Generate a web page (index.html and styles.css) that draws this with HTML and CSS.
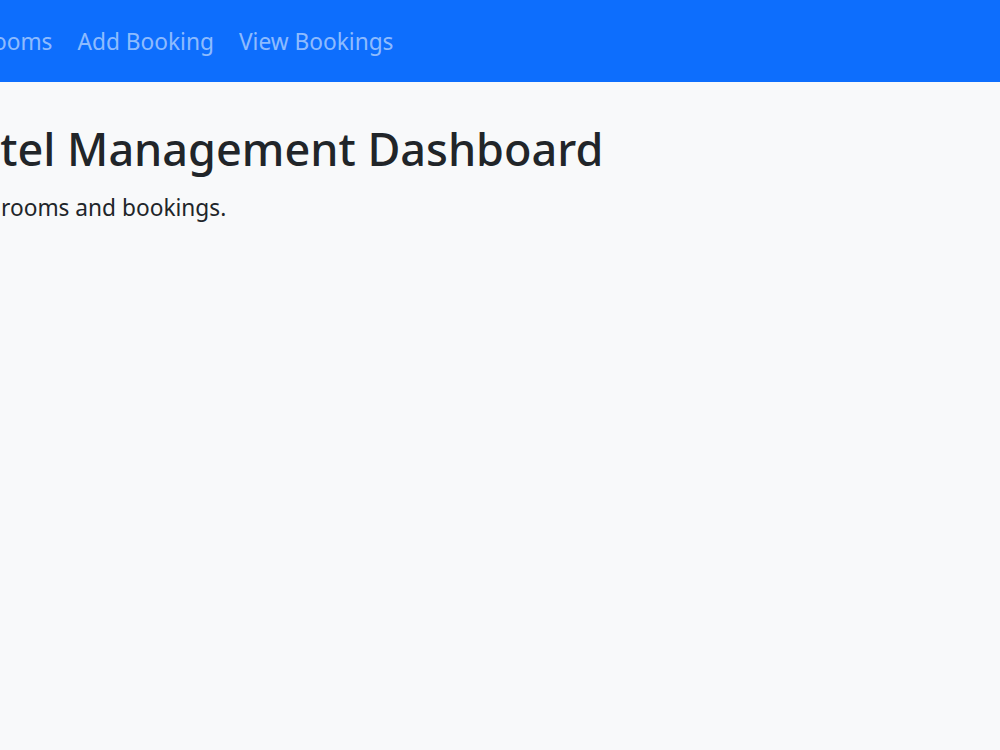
FILE: index.html
```html
<!DOCTYPE html>
<html lang="en">
<head>
  <meta charset="UTF-8" />
  <title>Hotel Management Dashboard</title>
  <link rel="stylesheet" href="styles.css">
</head>
<body>
  <nav class="navbar">
    <div class="nav-inner">
      <a class="brand" href="#">Hotel Admin</a>
      <ul class="nav-links">
        <li><a href="#">Dashboard</a></li>
        <li><a href="#">Rooms</a></li>
        <li><a href="#">Add Booking</a></li>
        <li><a href="#">View Bookings</a></li>
      </ul>
    </div>
  </nav>
  <main class="container">
    <h1>Hotel Management Dashboard</h1>
    <p class="lead">Track rooms and bookings.</p>
  </main>
</body>
</html>
```
FILE: styles.css
```css
html, body {
  margin: 0;
  overflow: hidden;
}
body {
  font-family: "Noto Sans", "Open Sans", sans-serif;
  background-color: #f8f9fa;
  color: #212529;
  height: 750px;
}
.navbar {
  background-color: #0d6efd;
  height: 82px;
  display: flex;
  align-items: center;
}
.nav-inner {
  display: flex;
  align-items: center;
  margin-left: -330px;
}
.brand {
  color: #fff;
  font-size: 25px;
  text-decoration: none;
  margin-right: 20px;
  white-space: nowrap;
}
.nav-links {
  display: flex;
  list-style: none;
  margin: 0;
  padding: 0;
  gap: 25px;
}
.nav-links a {
  color: rgba(255, 255, 255, 0.55);
  font-size: 22.7px;
  text-decoration: none;
  white-space: nowrap;
}
.container {
  margin-left: -61px;
  padding-top: 40px;
}
h1 {
  font-size: 45px;
  font-weight: 500;
  margin: 0 0 16px;
  white-space: nowrap;
  line-height: 1.2;
}
.lead {
  font-size: 22.7px;
  margin: 0;
  white-space: nowrap;
}
```
